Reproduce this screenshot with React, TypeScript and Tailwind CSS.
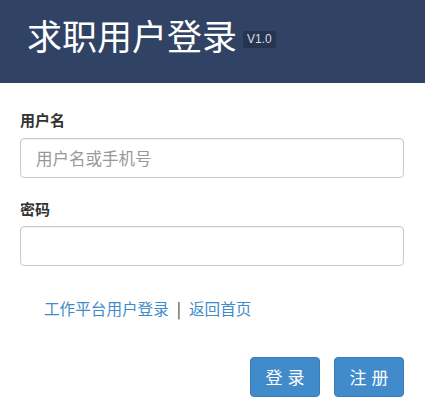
import React from "react";

/* =========================================================
   LOGIN PAGE
========================================================= */

const cjk = "font-['Microsoft_YaHei','Noto_Sans_CJK_SC',sans-serif]";

export default function App() {
  return (
    <main className={`min-h-[416px] w-[425px] bg-white ${cjk}`}>
      {/* HEADER */}

      <header className="h-[83px] bg-[#304365] pl-[27px] pt-[15px] flex items-start">
        <h1 className="text-[35px] leading-[40px] text-white font-normal">求职用户登录</h1>
        <span className="ml-[6px] mt-[16px] h-[17px] px-[4px] rounded-[3px] bg-[#25344f] text-[#d8dde6] text-[12px] leading-[17px] font-['Liberation_Sans',sans-serif]">
          V1.0
        </span>
      </header>

      {/* FORM */}

      <form className="px-[20px] pt-[26px] flex flex-col">
        <label className="text-[15px] leading-[21px] font-bold text-[#333]">用户名</label>
        <input
          name="username"
          placeholder="用户名或手机号"
          className="mt-[8px] h-[40px] w-[384px] border border-[#ccc] rounded-[4px] px-[15px] text-[16.5px] text-[#555] placeholder:text-[#999] outline-none shadow-[inset_0_1px_1px_rgba(0,0,0,0.075)]"
        />

        <label className="mt-[20px] text-[15px] leading-[21px] font-bold text-[#333]">密码</label>
        <input
          name="password"
          type="password"
          className="mt-[7px] h-[40px] w-[384px] border border-[#ccc] rounded-[4px] px-[15px] text-[16px] outline-none shadow-[inset_0_1px_1px_rgba(0,0,0,0.075)]"
        />

        {/* LINKS */}

        <div className="mt-[32px] pl-[24px] flex items-center text-[15.6px] leading-[21px]">
          <a className="text-[#428bca]">工作平台用户登录</a>
          <span className="mx-[8px] text-[#333]">|</span>
          <a className="text-[#428bca]">返回首页</a>
        </div>

        {/* BUTTONS */}

        <div className="mt-[38px] flex justify-end gap-[14px] pr-[1px]">
          <button
            type="submit"
            className="h-[40px] w-[70px] rounded-[4px] bg-[#428bca] border border-[#357ebd] text-white text-[17px] flex items-center justify-center gap-[5px]"
          >
            <span>登</span>
            <span>录</span>
          </button>
          <button
            type="button"
            className="h-[40px] w-[70px] rounded-[4px] bg-[#428bca] border border-[#357ebd] text-white text-[17px] flex items-center justify-center gap-[5px]"
          >
            <span>注</span>
            <span>册</span>
          </button>
        </div>
      </form>
    </main>
  );
}
